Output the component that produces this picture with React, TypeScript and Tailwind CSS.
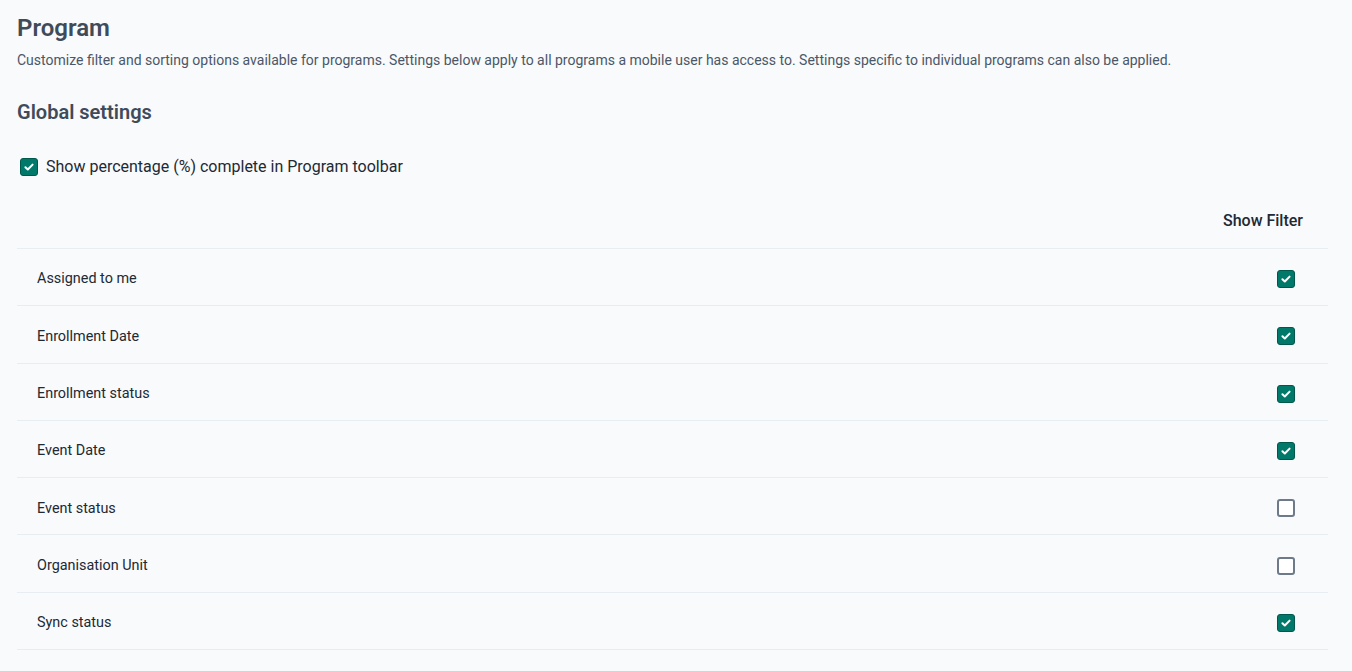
const filters: { label: string; checked: boolean }[] = [
  { label: "Assigned to me", checked: true },
  { label: "Enrollment Date", checked: true },
  { label: "Enrollment status", checked: true },
  { label: "Event Date", checked: true },
  { label: "Event status", checked: false },
  { label: "Organisation Unit", checked: false },
  { label: "Sync status", checked: true },
];

function Checkbox({ checked }: { checked: boolean }) {
  if (!checked) {
    return <span className="block h-[18px] w-[18px] rounded-[3px] border-2 border-[#6e7a8a] bg-white" />;
  }
  return (
    <span className="flex h-[18px] w-[18px] items-center justify-center rounded-[3px] border border-[#00574b] bg-[#00796b]">
      <svg width="12" height="12" viewBox="0 0 12 12" fill="none">
        <path d="M2.4 6.2l2.4 2.3L9.6 3.6" stroke="white" strokeWidth="2" strokeLinecap="round" strokeLinejoin="round" />
      </svg>
    </span>
  );
}

export default function App() {
  return (
    <div className="min-h-[671px] bg-[#f9fafb] pl-[17px] pr-[24px] pt-[14px] font-['Roboto',sans-serif]">
      <h1 className="text-[24px] font-semibold leading-[28px] text-[#404b5a]">Program</h1>
      <p className="mt-[8px] text-[14px] leading-[20px] text-[#4a5768]">
        Customize filter and sorting options available for programs. Settings below apply to all programs a mobile
        user has access to. Settings specific to individual programs can also be applied.
      </p>
      <h2 className="mt-[28px] text-[20px] font-semibold leading-[28px] text-[#404b5a]">Global settings</h2>
      <label className="mt-[29px] flex h-[24px] items-center gap-[8px] pl-[3px]">
        <Checkbox checked={true} />
        <span className="text-[16px] text-[#212934]">Show percentage (%) complete in Program toolbar</span>
      </label>
      <div className="mt-[32px] w-[1311px]">
        <div className="flex justify-end border-b border-[#e8edf2] pb-[17px] pr-[25px]">
          <span className="text-[16px] font-medium leading-[20px] text-[#212934]">Show Filter</span>
        </div>
        {filters.map((f) => (
          <div key={f.label} className="flex h-[57.3px] items-center justify-between border-b border-[#e8edf2] pl-[20px] pr-[33px] pt-[4px]">
            <span className="text-[14.4px] text-[#212934]">{f.label}</span>
            <Checkbox checked={f.checked} />
          </div>
        ))}
      </div>
    </div>
  );
}
